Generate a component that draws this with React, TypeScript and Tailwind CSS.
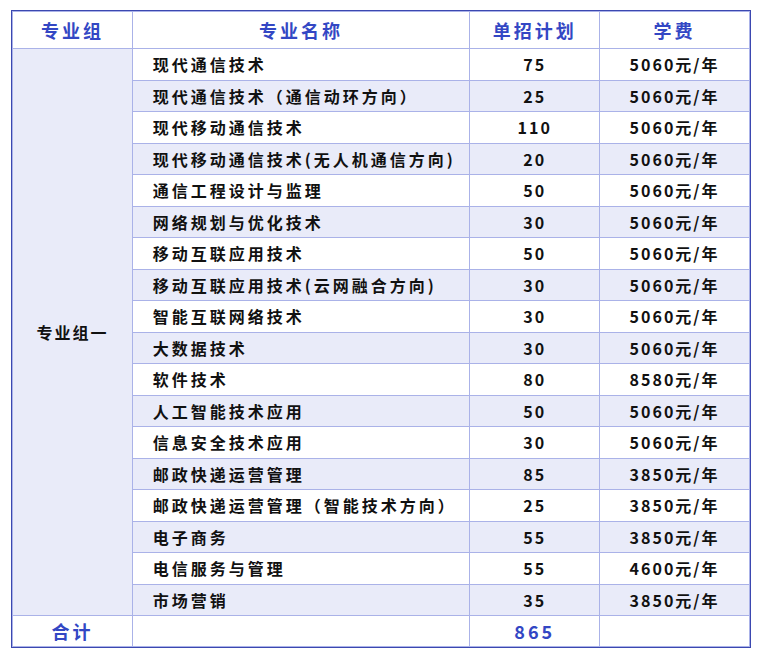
const rows: [string, string, string][] = [
  ["现代通信技术", "75", "5060元/年"],
  ["现代通信技术（通信动环方向）", "25", "5060元/年"],
  ["现代移动通信技术", "110", "5060元/年"],
  ["现代移动通信技术(无人机通信方向)", "20", "5060元/年"],
  ["通信工程设计与监理", "50", "5060元/年"],
  ["网络规划与优化技术", "30", "5060元/年"],
  ["移动互联应用技术", "50", "5060元/年"],
  ["移动互联应用技术(云网融合方向)", "30", "5060元/年"],
  ["智能互联网络技术", "30", "5060元/年"],
  ["大数据技术", "30", "5060元/年"],
  ["软件技术", "80", "8580元/年"],
  ["人工智能技术应用", "50", "5060元/年"],
  ["信息安全技术应用", "30", "5060元/年"],
  ["邮政快递运营管理", "85", "3850元/年"],
  ["邮政快递运营管理（智能技术方向）", "25", "3850元/年"],
  ["电子商务", "55", "3850元/年"],
  ["电信服务与管理", "55", "4600元/年"],
  ["市场营销", "35", "3850元/年"],
];

export default function App() {
  const cell = "border border-[#aab2e8] p-0";
  return (
    <div className="w-[764px] h-[659px] bg-white pt-[11px] pl-[12px]" style={{ fontFamily: '"Noto Sans CJK SC", "Noto Sans", sans-serif' }}>
      <table className="border-collapse outline outline-1 outline-[#3b48b0] font-bold text-[16px] text-[#111]" style={{ width: 738 }}>
        <colgroup>
          <col style={{ width: 120 }} />
          <col style={{ width: 338 }} />
          <col style={{ width: 130 }} />
          <col style={{ width: 150 }} />
        </colgroup>
        <thead>
          <tr className="h-[37px] text-[#3347c4] text-[18px] tracking-[3px]">
            <th className={cell}>专业组</th>
            <th className={cell}>专业名称</th>
            <th className={cell}>单招计划</th>
            <th className={cell}>学费</th>
          </tr>
        </thead>
        <tbody>
          {rows.map((r, i) => (
            <tr key={i} className={`h-[31.5px] ${i % 2 === 1 ? "bg-[#e9ebf9]" : "bg-white"}`}>
              {i === 0 && (
                <td rowSpan={rows.length} className={`${cell} bg-[#e9ebf9] text-center tracking-[2px]`}>专业组一</td>
              )}
              <td className={`${cell} pl-[20px] tracking-[3px]`}>{r[0]}</td>
              <td className={`${cell} text-center tracking-[2px]`}>{r[1]}</td>
              <td className={`${cell} text-center tracking-[2px]`}>{r[2]}</td>
            </tr>
          ))}
          <tr className="h-[31px] text-[#3347c4] text-[18px]">
            <td className={`${cell} text-center tracking-[3px]`}>合计</td>
            <td className={cell}></td>
            <td className={`${cell} text-center tracking-[3px]`}>865</td>
            <td className={cell}></td>
          </tr>
        </tbody>
      </table>
    </div>
  );
}
